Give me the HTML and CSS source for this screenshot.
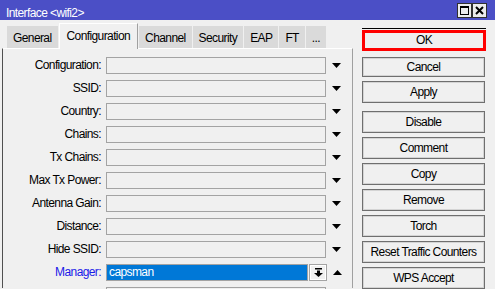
FILE: index.html
```html
<!DOCTYPE html>
<html lang="en">
<head>
    <meta charset="UTF-8">
    <title>Interface &lt;wifi2&gt;</title>
    <link rel="stylesheet" href="styles.css">
</head>
<body>
    <div class="window">
        <div class="titlebar">
            <span class="title">Interface &lt;wifi2&gt;</span>
            <div class="win-buttons">
                <span class="win-btn"><span class="max-icon"></span></span>
                <span class="win-btn">
                    <svg width="9" height="9" viewBox="0 0 9 9"><path d="M1 1L8 8M8 1L1 8" stroke="#000" stroke-width="2"/></svg>
                </span>
            </div>
        </div>

        <div class="main">
            <div class="left">
                <div class="tabs">
                    <div class="tab">General</div>
                    <div class="tab active">Configuration</div>
                    <div class="tab">Channel</div>
                    <div class="tab">Security</div>
                    <div class="tab">EAP</div>
                    <div class="tab">FT</div>
                    <div class="tab">...</div>
                </div>

                <div class="panel">
                    <div class="row"><label>Configuration:</label><div class="field"></div><svg class="arrow" width="9" height="5" viewBox="0 0 9 5"><path d="M0 0H9L4.5 5Z"/></svg></div>
                    <div class="row"><label>SSID:</label><div class="field"></div><svg class="arrow" width="9" height="5" viewBox="0 0 9 5"><path d="M0 0H9L4.5 5Z"/></svg></div>
                    <div class="row"><label>Country:</label><div class="field"></div><svg class="arrow" width="9" height="5" viewBox="0 0 9 5"><path d="M0 0H9L4.5 5Z"/></svg></div>
                    <div class="row"><label>Chains:</label><div class="field"></div><svg class="arrow" width="9" height="5" viewBox="0 0 9 5"><path d="M0 0H9L4.5 5Z"/></svg></div>
                    <div class="row"><label>Tx Chains:</label><div class="field"></div><svg class="arrow" width="9" height="5" viewBox="0 0 9 5"><path d="M0 0H9L4.5 5Z"/></svg></div>
                    <div class="row"><label>Max Tx Power:</label><div class="field"></div><svg class="arrow" width="9" height="5" viewBox="0 0 9 5"><path d="M0 0H9L4.5 5Z"/></svg></div>
                    <div class="row"><label>Antenna Gain:</label><div class="field"></div><svg class="arrow" width="9" height="5" viewBox="0 0 9 5"><path d="M0 0H9L4.5 5Z"/></svg></div>
                    <div class="row"><label>Distance:</label><div class="field"></div><svg class="arrow" width="9" height="5" viewBox="0 0 9 5"><path d="M0 0H9L4.5 5Z"/></svg></div>
                    <div class="row"><label>Hide SSID:</label><div class="field"></div><svg class="arrow" width="9" height="5" viewBox="0 0 9 5"><path d="M0 0H9L4.5 5Z"/></svg></div>
                    <div class="row">
                        <label class="link">Manager:</label>
                        <div class="field selected">capsman</div>
                        <span class="small-btn">
                            <svg width="9" height="9" viewBox="0 0 9 9"><path d="M1 0H8V1.5H1ZM3 2.5H6V5H3ZM0 5H9L4.5 9Z"/></svg>
                        </span>
                        <svg class="arrow" width="9" height="5" viewBox="0 0 9 5"><path d="M0 5H9L4.5 0Z"/></svg>
                    </div>
                    <div class="row"><label></label><div class="field"></div><svg class="arrow" width="9" height="5" viewBox="0 0 9 5"><path d="M0 0H9L4.5 5Z"/></svg></div>
                </div>
            </div>

            <div class="actions">
                <button class="btn ok">OK</button>
                <button class="btn cancel">Cancel</button>
                <button class="btn apply">Apply</button>
                <button class="btn">Disable</button>
                <button class="btn">Comment</button>
                <button class="btn">Copy</button>
                <button class="btn">Remove</button>
                <button class="btn">Torch</button>
                <button class="btn">Reset Traffic Counters</button>
                <button class="btn">WPS Accept</button>
            </div>
        </div>
    </div>
</body>
</html>
```

FILE: styles.css
```css
body {
    margin: 0;
    background-color: #f0f0f0;
    font-family: "Liberation Sans", Arial, sans-serif;
    font-size: 12px;
    letter-spacing: -0.6px;
    color: #000;
}
.window {
    width: 495px;
    height: 289px;
    overflow: hidden;
}
.titlebar {
    height: 20px;
    background-color: #4b4fc6;
    display: flex;
    justify-content: space-between;
    align-items: flex-start;
    padding: 0 8px 0 6px;
    box-sizing: border-box;
}
.title {
    color: white;
    padding-top: 6px;
    line-height: 15px;
}
.win-buttons {
    display: flex;
    margin-top: 3px;
}
.win-btn {
    width: 13px;
    height: 13px;
    border: 1px solid #303030;
    background-color: #ececec;
    display: flex;
    align-items: center;
    justify-content: center;
}
.max-icon {
    width: 7px;
    height: 6px;
    border: 1px solid #000;
    border-top-width: 2px;
}
.main {
    display: flex;
    padding-top: 3px;
}
.left {
    margin-left: 2px;
    width: 351px;
}
.tabs {
    display: flex;
    align-items: flex-end;
    gap: 1px;
    height: 25px;
    padding-left: 5px;
}
.tab {
    height: 22px;
    box-sizing: border-box;
    padding: 5px 6px 0;
    line-height: 15px;
    background-color: #dadada;
}
.tab.active {
    height: 26px;
    margin-bottom: -1px;
    padding: 5px 7px 0;
    background-color: #f0f0f0;
    border: 1px solid #fff;
    border-right-color: #a0a0a0;
    border-bottom: none;
    position: relative;
    z-index: 1;
}
.panel {
    height: 240px;
    box-sizing: border-box;
    padding-top: 8px;
    border-top: 1px solid #fff;
    border-left: 1px solid #505050;
    border-right: 1px solid #a0a0a0;
}
.row {
    display: flex;
    align-items: center;
    height: 17px;
    margin-bottom: 6px;
    line-height: 17px;
}
.row label {
    width: 98px;
    text-align: right;
    margin-right: 5px;
}
.row label.link {
    color: #1a1ae8;
}
.field {
    width: 220px;
    height: 17px;
    box-sizing: border-box;
    border: 1px solid #a3a3a3;
    background-color: #f0f0f0;
}
.field.selected {
    width: 202px;
    background-color: #0078d7;
    color: white;
    padding-left: 2px;
    line-height: 15px;
}
.small-btn {
    width: 18px;
    height: 17px;
    box-sizing: border-box;
    margin-left: 1px;
    border: 1px solid #a3a3a3;
    box-shadow: inset 0 0 0 1px #fff;
    display: flex;
    align-items: center;
    justify-content: center;
}
.arrow {
    margin-left: 6px;
}
.actions {
    display: flex;
    flex-direction: column;
    margin-left: 9px;
    padding-top: 7px;
}
.btn {
    width: 123px;
    height: 22px;
    margin: 0 0 4px;
    padding: 0 0 1px;
    box-sizing: border-box;
    border: 1px solid #6f6f6f;
    box-shadow: inset 0 0 0 1px #d4d4d4;
    background-color: #f0f0f0;
    font: inherit;
    letter-spacing: inherit;
    color: #000;
    text-align: center;
}
.btn.ok {
    width: 124px;
    height: 21px;
    margin-bottom: 6px;
    border: 3px solid #ff0000;
    box-shadow: 0 -1px 0 #f0f0f0, 0 -2px 0 #000;
}
.btn.cancel {
    height: 20px;
}
.btn.apply {
    margin-bottom: 8px;
}
```
